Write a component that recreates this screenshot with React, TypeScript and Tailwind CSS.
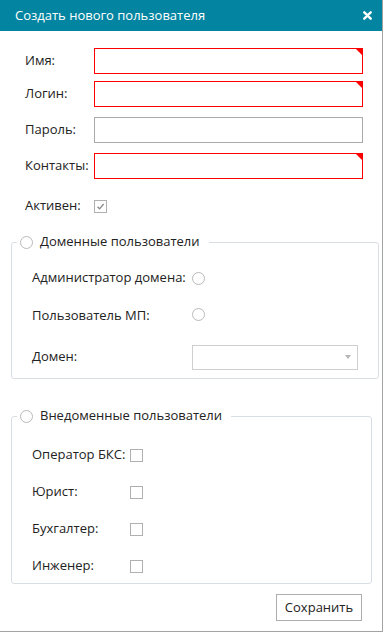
import React from 'react';

function Radio() {
  return <span className="inline-block h-[13px] w-[13px] shrink-0 rounded-full border border-[#b9b9b9] bg-white" />;
}

function Checkbox({ checked = false }: { checked?: boolean }) {
  return (
    <span className="flex h-[13px] w-[13px] shrink-0 items-center justify-center border border-[#b0b0b0] bg-white">
      {checked ? (
        <svg width="9" height="9" viewBox="0 0 9 9">
          <path d="M1.5 4.8 L3.6 6.8 L7.6 2" fill="none" stroke="#8a8a8a" strokeWidth="1.3" />
        </svg>
      ) : null}
    </span>
  );
}

function TextRow({ label, required, className = '' }: { label: string; required?: boolean; className?: string }) {
  return (
    <div className={`flex items-center ${className}`}>
      <label className="w-[69px] shrink-0">{label}</label>
      <div
        className={`relative h-[26px] w-[269px] border bg-white ${
          required ? 'border-[#ff0000]' : 'border-[#a9a9a9]'
        }`}
      >
        {required ? (
          <span className="absolute right-0 top-0 h-0 w-0 border-l-[6px] border-t-[6px] border-l-transparent border-t-[#ff0000]" />
        ) : null}
      </div>
    </div>
  );
}

function Group({ title, children, className = '' }: { title: string; children: React.ReactNode; className?: string }) {
  return (
    <fieldset className={`ml-[11px] w-[361px] rounded-[3px] border border-[#d9dee4] ${className}`}>
      <legend className="ml-[5px] flex h-[18px] items-center gap-[7px] pl-[3px] pr-[9px]">
        <Radio />
        <span>{title}</span>
      </legend>
      <div className="px-[20px]">{children}</div>
    </fieldset>
  );
}

export default function App() {
  return (
    <div className="flex h-[632px] w-[383px] flex-col border-b border-r border-[#a3a3a3] bg-white font-['Open_Sans',sans-serif] text-[13px] text-[#222]">
      <div className="flex h-[31px] shrink-0 items-center justify-between bg-[#0385a1] pl-[15px] pr-[10px] text-white">
        <span>Создать нового пользователя</span>
        <svg width="9" height="9" viewBox="0 0 9 9">
          <path d="M1.3 1.3 L7.7 7.7 M7.7 1.3 L1.3 7.7" stroke="#fff" strokeWidth="2.4" strokeLinecap="round" />
        </svg>
      </div>

      <div className="flex flex-col pl-[25px] pt-[17px]">
        <TextRow label="Имя:" required />
        <TextRow label="Логин:" required className="mt-[7px]" />
        <TextRow label="Пароль:" className="mt-[10px]" />
        <TextRow label="Контакты:" required className="mt-[10px]" />
        <div className="mt-[14px] flex h-[26px] items-center">
          <label className="w-[69px] shrink-0">Активен:</label>
          <Checkbox checked />
        </div>
      </div>

      <Group title="Доменные пользователи" className="mt-[14px] pb-[8px]">
        <div className="mt-[14px] flex h-[26px] items-center">
          <span className="w-[160px] shrink-0">Администратор домена:</span>
          <Radio />
        </div>
        <div className="mt-[12px] flex h-[26px] items-center">
          <span className="w-[160px] shrink-0">Пользователь МП:</span>
          <span className="-mt-[4px] flex">
            <Radio />
          </span>
        </div>
        <div className="mt-[15px] flex h-[26px] items-center">
          <span className="w-[160px] shrink-0">Домен:</span>
          <div className="flex h-[25px] w-[166px] items-center justify-end border border-[#cfcfcf] bg-white pr-[6px]">
            <span className="h-0 w-0 border-x-[3px] border-t-[4px] border-x-transparent border-t-[#b5b5b5]" />
          </div>
        </div>
      </Group>

      <Group title="Внедоменные пользователи" className="mt-[28px] pb-[4px]">
        {['Оператор БКС:', 'Юрист:', 'Бухгалтер:', 'Инженер:'].map((name, i) => (
          <div key={name} className={`flex h-[26px] items-center ${i === 0 ? 'mt-[17px]' : 'mt-[11px]'}`}>
            <span className="w-[98px] shrink-0">{name}</span>
            <Checkbox />
          </div>
        ))}
      </Group>

      <div className="mt-[10px] flex justify-end pr-[20px]">
        <button className="h-[27px] w-[86px] border border-[#adadad] bg-white text-[13px] text-[#222]">Сохранить</button>
      </div>
    </div>
  );
}
